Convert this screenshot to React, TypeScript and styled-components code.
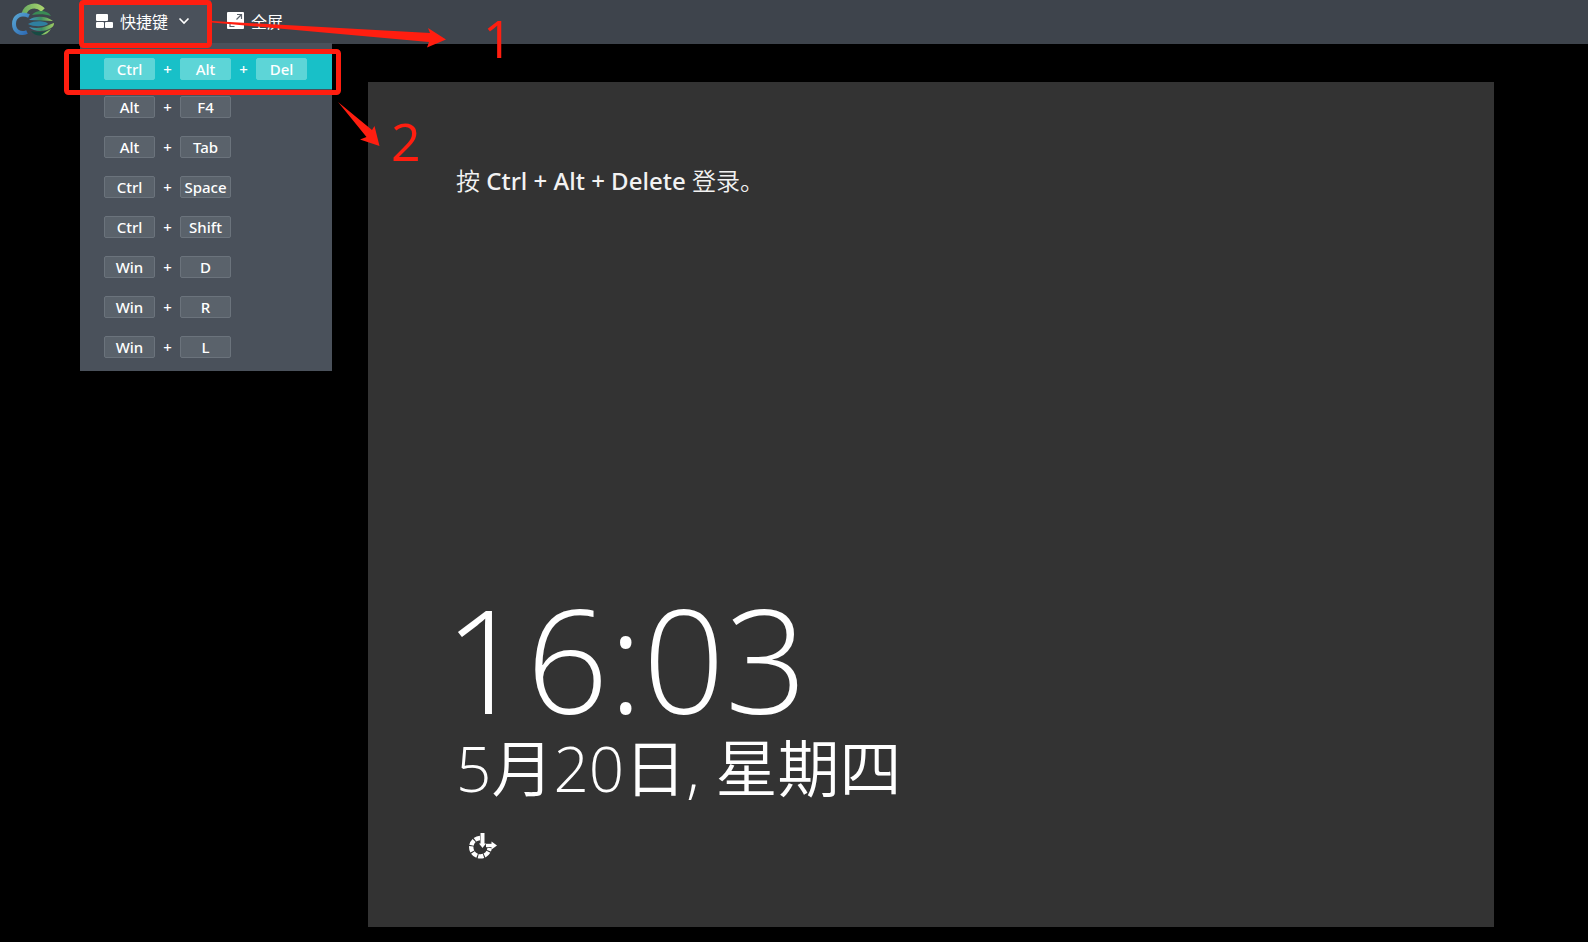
import React from "react";
import styled, { createGlobalStyle, css } from "styled-components";

const latin = '"Noto Sans", "Open Sans"';
const cjk = '"Noto Sans CJK SC"';
const red = "#ff1e10";

const GlobalStyle = createGlobalStyle`
  *, *::before, *::after { box-sizing: border-box; }
  html { background: #000; }
  body {
    margin: 0;
    color: #fff;
    font-family: ${latin}, ${cjk}, sans-serif;
  }
`;

const Page = styled.div`
  position: relative;
  display: flex;
  flex-direction: column;
  min-height: 100vh;
  overflow: hidden;
`;

const Toolbar = styled.header`
  display: flex;
  align-items: stretch;
  height: 44px;
  background: #3e444c;
`;

const Brand = styled.a`
  display: flex;
  align-items: center;
  width: 80px;
  padding: 0 0 4px 12px;
`;

const MenuHolder = styled.div`
  position: relative;
  display: flex;
`;

const ToolButton = styled.button<{ $open?: boolean }>`
  display: flex;
  align-items: center;
  gap: 7px;
  height: 43px;
  padding: 0 16px;
  border: 0;
  background: ${(p) => (p.$open ? "#4a515b" : "transparent")};
  color: #fff;
  font: 400 16px/24px ${latin}, ${cjk}, sans-serif;
  white-space: nowrap;
  svg { flex: none; }
`;

const ShortcutMenu = styled.ul`
  position: absolute;
  z-index: 2;
  top: 43px;
  left: 0;
  width: 252px;
  margin: 0;
  padding: 8px 0 2px;
  background: #4a515b;
  list-style: none;
`;

const Shortcut = styled.button<{ $active?: boolean }>`
  display: flex;
  align-items: flex-start;
  width: 100%;
  height: ${(p) => (p.$active ? 38 : 40)}px;
  padding: 7px 24px 0;
  border: 0;
  background: ${(p) => (p.$active ? "#18c0c8" : "transparent")};
  color: #fff;
  font: 500 15px/20px ${latin}, ${cjk}, sans-serif;
`;

const Key = styled.kbd<{ $active?: boolean }>`
  width: 51px;
  height: 22px;
  border: 1px solid #6b737c;
  border-radius: 2px;
  background: #5a626b;
  font: inherit;
  text-align: center;
  ${(p) =>
    p.$active &&
    css`
      border-color: #5dd5d7;
      background: #5dd5d7;
    `}
`;

const Plus = styled.span`
  width: 25px;
  line-height: 22px;
  text-align: center;
`;

const Stage = styled.main`
  padding: 38px 94px 15px 368px;
`;

const RemoteScreen = styled.section`
  display: flex;
  flex-direction: column;
  justify-content: space-between;
  aspect-ratio: 4 / 3;
  padding: 81px 76px 67px;
  background: #333;
`;

const Hint = styled.p`
  margin: 0;
  padding-left: 12px;
  font: 500 24px/36px ${latin}, ${cjk}, sans-serif;
  color: #f2f2f2;
`;

const Han = styled.span`
  font-weight: 350;
`;

const LockInfo = styled.div`
  display: flex;
  flex-direction: column;
  align-items: flex-start;
`;

const Clock = styled.time`
  font: 300 144px/140px "Open Sans", ${latin}, sans-serif;
`;

const DateLine = styled.time`
  padding-left: 12px;
  font: 350 62px/80px "Open Sans", ${cjk}, sans-serif;
  white-space: nowrap;
`;

const AccessButton = styled.button`
  display: flex;
  margin: 24px 0 0 25px;
  padding: 0;
  border: 0;
  background: transparent;
  color: #fff;
`;

const Markup = styled.svg`
  position: absolute;
  z-index: 3;
  top: 0;
  left: 0;
  pointer-events: none;
  text {
    fill: ${red};
    font: 400 52px "Open Sans", sans-serif;
  }
`;

function Logo() {
  return (
    <svg width="44" height="34" viewBox="0 0 44 34" aria-hidden="true">
      <defs>
        <linearGradient id="blue" x1="0" y1="0" x2="1" y2="1">
          <stop offset="0" stopColor="#58a5d2" />
          <stop offset="1" stopColor="#2c69b4" />
        </linearGradient>
        <linearGradient id="green" x1="0" y1="0" x2="1" y2="0">
          <stop offset="0" stopColor="#6eae62" />
          <stop offset="1" stopColor="#a9d46e" />
        </linearGradient>
        <linearGradient id="band" x1="0" y1="0" x2="1" y2="0">
          <stop offset="0" stopColor="#3f8fca" />
          <stop offset="0.5" stopColor="#3c8d63" />
          <stop offset="1" stopColor="#a0cf62" />
        </linearGradient>
      </defs>
      <path d="M12 11C14 3 24 0 31 7" fill="none" stroke="url(#green)" strokeWidth="5" />
      <path d="M17 13C8 9 2 14 2 21c0 7 6 11 13 8" fill="none" stroke="url(#blue)" strokeWidth="4" />
      <path d="M20 12c4-6 16-5 19 1-6-2-13-2-19-1Z" fill="#3a8a55" />
      <path d="M17 17c6-5 18-4 24 1-8 0-16-1-24-1Z" fill="url(#band)" />
      <path d="M16 21c7-4 18-3 20 0-4 3-15 3-20 0Z" fill="#2f7fa0" />
      <path d="M37 22c2-1 4-2 5-2 0 2-1 4-3 5-6 4-17 4-22-1 7 2 14 1 20-2Z" fill="url(#band)" />
      <path d="M19 28c6 2 13 1 19-1-4 6-14 8-19 1Z" fill="#174b43" />
      <path d="M29 32c5 0 8-3 10-6-2 1-6 3-10 6Z" fill="#8fc565" />
    </svg>
  );
}

const BlocksIcon = () => (
  <svg width="17" height="16" viewBox="0 0 17 16" fill="#fff" aria-hidden="true">
    <rect width="12" height="7" rx="1" />
    <rect width="8" height="6" y="8" rx="1" />
    <rect width="8" height="6" x="9" y="8" rx="1" />
  </svg>
);

const ChevronIcon = () => (
  <svg width="20" height="10" viewBox="0 0 20 10" fill="none" stroke="#fff" strokeWidth="1.6" aria-hidden="true">
    <path d="M4.500 1.500 9 6l4.500-4.500" />
  </svg>
);

const FullscreenIcon = () => (
  <svg width="17" height="20" viewBox="0 0 17 20" aria-hidden="true">
    <rect width="17" height="17" rx="1" fill="#fff" />
    <path d="M9.500 7.500 14 3M10 2.500h4.500V7M3 10v4.500h4.500" fill="none" stroke="#5a626b" strokeWidth="1.200" />
  </svg>
);

const EaseOfAccessIcon = () => (
  <svg width="28" height="28" viewBox="0 0 28 28" fill="none" stroke="currentColor" aria-hidden="true">
    <path d="M11 6a9.200 9.200 0 1 0 9.600 10" strokeWidth="4.400" strokeDasharray="5.400 1.100" />
    <path d="M13.500 1v12" strokeWidth="4" />
    <path d="M10 11.500h7l-3.500 4.500z" fill="currentColor" stroke="none" />
    <path d="M17 13.500h6" strokeWidth="3.400" />
    <path d="m22.500 9.500 5.500 4-5.500 4z" fill="currentColor" stroke="none" />
  </svg>
);

const shortcuts = [
  ["Ctrl", "Alt", "Del"],
  ["Alt", "F4"],
  ["Alt", "Tab"],
  ["Ctrl", "Space"],
  ["Ctrl", "Shift"],
  ["Win", "D"],
  ["Win", "R"],
  ["Win", "L"],
];

export default function App() {
  return (
    <Page>
      <GlobalStyle />
      <Toolbar>
        <Brand href="#" aria-label="Home">
          <Logo />
        </Brand>
        <MenuHolder>
          <ToolButton $open aria-expanded="true">
            <BlocksIcon />
            快捷键
            <ChevronIcon />
          </ToolButton>
          <ShortcutMenu>
            {shortcuts.map((keys, row) => (
              <li key={keys.join("+")}>
                <Shortcut $active={row === 0}>
                  {keys.map((name, i) => (
                    <React.Fragment key={name}>
                      {i > 0 && <Plus>+</Plus>}
                      <Key $active={row === 0}>{name}</Key>
                    </React.Fragment>
                  ))}
                </Shortcut>
              </li>
            ))}
          </ShortcutMenu>
        </MenuHolder>
        <ToolButton>
          <FullscreenIcon />
          全屏
        </ToolButton>
      </Toolbar>
      <Stage>
        <RemoteScreen>
          <Hint>
            <Han>按</Han> Ctrl + Alt + Delete <Han>登录。</Han>
          </Hint>
          <LockInfo>
            <Clock>16:03</Clock>
            <DateLine>5月20日, 星期四</DateLine>
            <AccessButton aria-label="Ease of access">
              <EaseOfAccessIcon />
            </AccessButton>
          </LockInfo>
        </RemoteScreen>
      </Stage>
      <Markup width="520" height="180" viewBox="0 0 520 180">
        <g fill="none" stroke={red} strokeWidth="5">
          <rect x="81.500" y="2.500" width="128" height="43" rx="2" />
          <rect x="66.500" y="51.500" width="272" height="41" rx="2" />
        </g>
        <g fill={red}>
          <path d="M212 21 430 33l-2-5 18 11.500-19 8 2-5.500L212 22.500Z" />
          <path d="m338 102 34 28 2.500-4 5 20-19.500-6.500 6.500-2.500L338 102Z" />
        </g>
        <text x="483" y="58">1</text>
        <text x="391" y="161">2</text>
      </Markup>
    </Page>
  );
}
